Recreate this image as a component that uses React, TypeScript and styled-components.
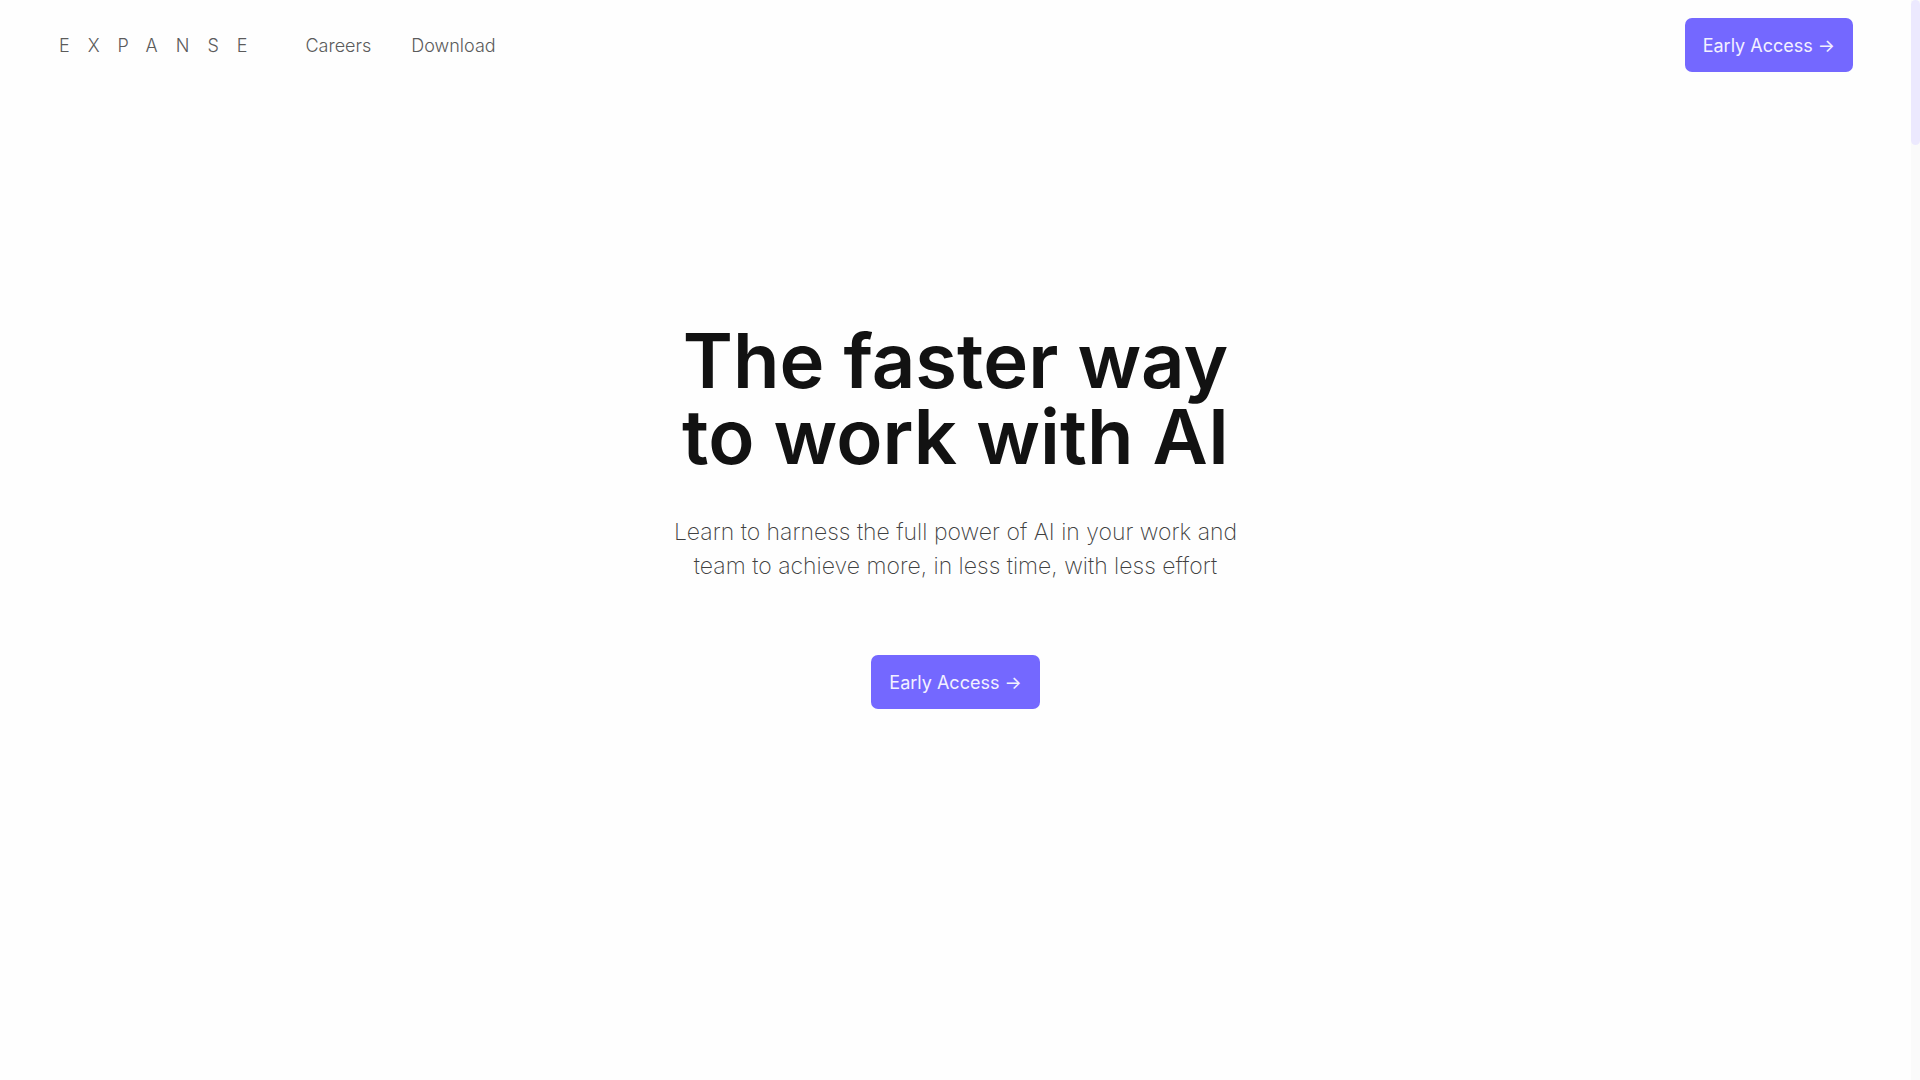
import React from "react";
import styled, { createGlobalStyle } from "styled-components";

const GlobalStyle = createGlobalStyle`
  *, *::before, *::after { box-sizing: border-box; }
  body {
    margin: 0;
    background: #fefefe;
    color: #5b5b5b;
    font-family: Inter, "Liberation Sans", sans-serif;
    font-size: 18px;
    font-weight: 300;
  }
`;

const Shell = styled.div`
  display: grid;
  grid-template-columns: minmax(0, 1fr) 9px;
  min-height: 100vh;
`;

const Page = styled.div`
  display: flex;
  flex-direction: column;
`;

const Header = styled.header`
  display: flex;
  align-items: center;
  justify-content: space-between;
  padding: 18px 58px;
`;

const Nav = styled.nav`
  display: flex;
  align-items: center;
  gap: 40px;
  padding: 2px 0 0 1px;
`;

const NavLink = styled.a`
  color: inherit;
  line-height: 24px;
  text-decoration: none;
`;

const Logo = styled(NavLink)`
  letter-spacing: 18px;
`;

const AccessButton = styled.button`
  height: 54px;
  padding: 0 18px;
  border: 0;
  border-radius: 7px;
  background: #7468ff;
  color: #f3f1ff;
  font: inherit;
  font-weight: 400;
  cursor: pointer;
`;

const Hero = styled.main`
  display: flex;
  flex-direction: column;
  align-items: center;
  padding: 232px 24px;
  text-align: center;
`;

const Title = styled.h1`
  margin: 0;
  color: #121212;
  font-size: 76px;
  font-weight: 600;
  line-height: 76px;
`;

const Subtitle = styled.p`
  margin: 41px 0 72px;
  color: #404040;
  font-size: 23px;
  font-weight: 200;
  line-height: 34px;
`;

const Track = styled.div`
  background: #fafafa;
`;

const Thumb = styled.div`
  height: 145px;
  border-radius: 5px;
  background: #ece9fe;
`;

export default function App() {
  return (
    <>
      <GlobalStyle />
      <Shell>
        <Page>
          <Header>
            <Nav aria-label="Main">
              <Logo href="#home">EXPANSE</Logo>
              <NavLink href="#careers">Careers</NavLink>
              <NavLink href="#download">Download</NavLink>
            </Nav>
            <AccessButton type="button">Early Access →</AccessButton>
          </Header>
          <Hero>
            <Title>
              The faster way
              <br />
              to work with AI
            </Title>
            <Subtitle>
              Learn to harness the full power of AI in your work and
              <br />
              team to achieve more, in less time, with less effort
            </Subtitle>
            <AccessButton type="button">Early Access →</AccessButton>
          </Hero>
        </Page>
        <Track aria-hidden="true">
          <Thumb />
        </Track>
      </Shell>
    </>
  );
}
